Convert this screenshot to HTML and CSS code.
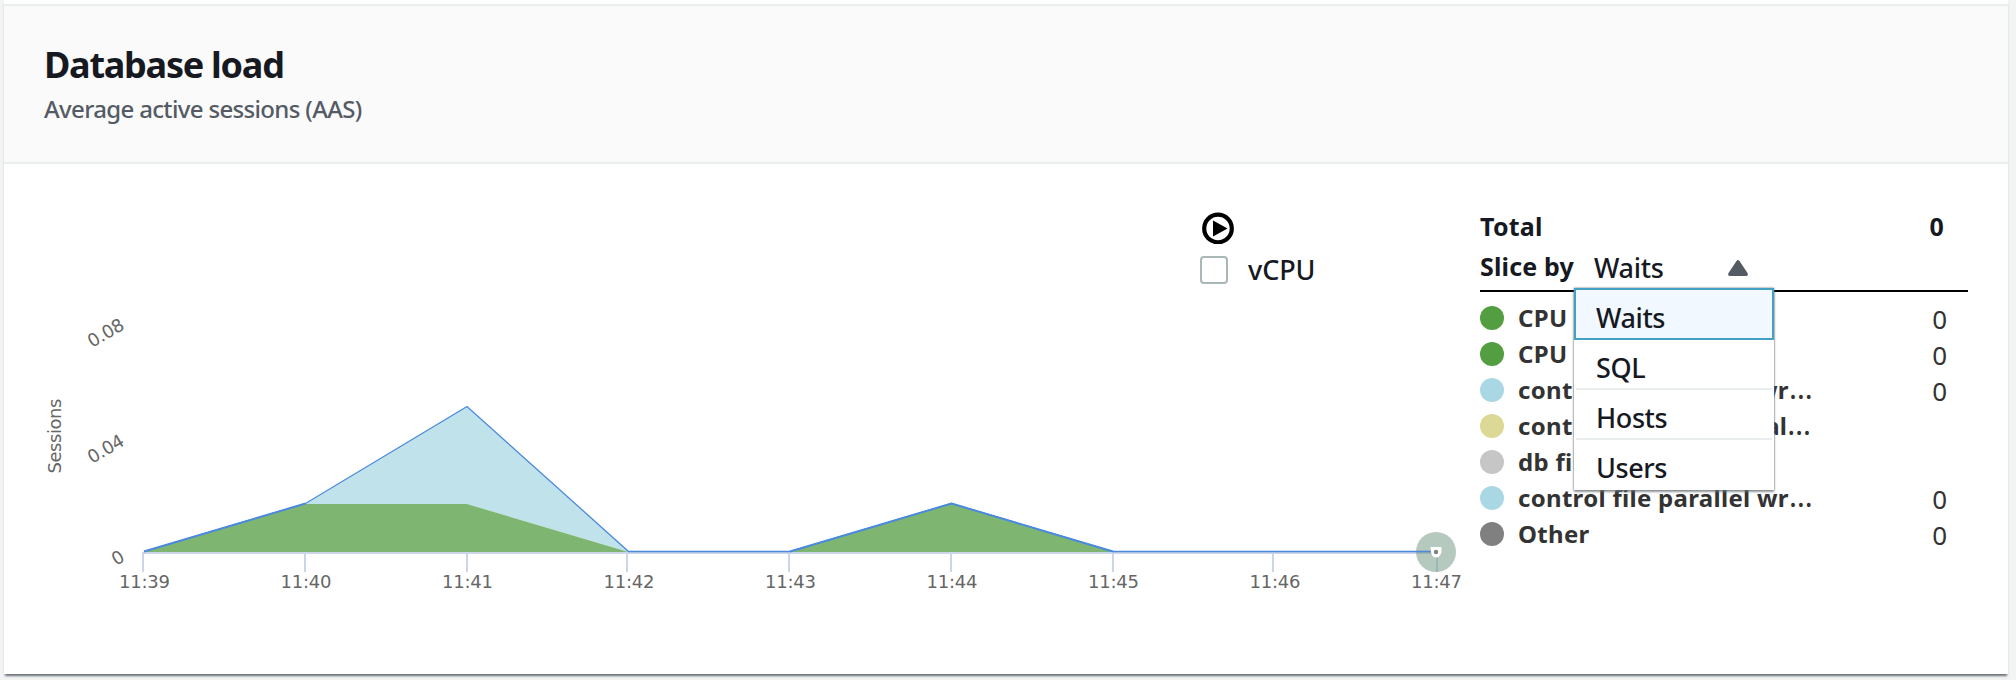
FILE: index.html
```html
<!DOCTYPE html>
<html lang="en">
<head>
<meta charset="utf-8">
<title>Database load</title>
<link rel="stylesheet" href="styles.css">
</head>
<body>
<section class="card">
  <header class="card-header">
    <h2 class="title"><span>Database load</span></h2>
    <p class="subtitle"><span>Average active sessions (AAS)</span></p>
  </header>
  <div class="card-body">
    <div class="chart-column">
      <div class="controls">
        <svg class="play" width="32" height="32" viewBox="0 0 32 32"><circle cx="16" cy="16.500" r="13.800" fill="none" stroke="#000" stroke-width="4.200"/><path d="M11 8.500L25.500 16.500L11 24.500Z"/></svg>
        <label class="vcpu"><i class="checkbox"></i><span>vCPU</span></label>
      </div>
      <svg class="chart" width="1470" height="310" viewBox="0 290 1470 310">
        <g class="axis-text">
          <text transform="translate(61 473.500) rotate(-90)" textLength="75">Sessions</text>
          <text transform="translate(92 348) rotate(-30)" textLength="39">0.08</text>
          <text transform="translate(92 464) rotate(-30)" textLength="39">0.04</text>
          <text transform="translate(116 566) rotate(-30)">0</text>
          <text x="119" y="588" textLength="51">11:39</text>
          <text x="280.500" y="588" textLength="51">11:40</text>
          <text x="442" y="588" textLength="51">11:41</text>
          <text x="603.500" y="588" textLength="51">11:42</text>
          <text x="765" y="588" textLength="51">11:43</text>
          <text x="926.500" y="588" textLength="51">11:44</text>
          <text x="1088" y="588" textLength="51">11:45</text>
          <text x="1249.500" y="588" textLength="51">11:46</text>
          <text x="1411" y="588" textLength="51">11:47</text>
        </g>
        <path d="M305.500 504L467 406.500L628.500 552L467 504Z" fill="#c0e2ea"/>
        <path d="M144 552L305.500 504H467L628.500 552ZM790 552L951.500 504L1113 552Z" fill="#7eb671"/>
        <path d="M142 553H1438M143 554V572M305 554V572M467 554V572M627 554V572M789 554V572M951 554V572M1113 554V572M1273 554V572M1437 554V572" fill="none" stroke="#ccd6eb" stroke-width="2"/>
        <path d="M144 551.500L305.500 503.500L467 406.500L628.500 551.500H790L951.500 503.500L1113 551.500H1436" fill="none" stroke="#4a89dc" stroke-width="1.300"/>
        <path d="M144 551.500L305.500 503.500M790 551.500L951.500 503.500L1113 551.500" fill="none" stroke="#4a89dc" stroke-width="1.900"/>
        <circle cx="1436" cy="552" r="20" fill="#6c947f" fill-opacity=".5"/>
        <path d="M1416 551.500H1431" stroke="#4a89dc" stroke-width="1.200"/>
        <path d="M1430.500 547H1441.500V552Q1440 557.500 1436 557.500Q1432 557.500 1431 552Z" fill="#fff"/>
        <circle cx="1436" cy="552" r="2.200" fill="#808080"/>
      </svg>
    </div>
    <aside class="legend">
      <div class="total"><b>Total</b><b class="total-value">0</b></div>
      <div class="slice">
        <b>Slice by</b>
        <div class="select"><span>Waits</span><svg width="20" height="16" viewBox="0 0 20 16"><path d="M8.500 1Q10 -.8 11.500 1L19.500 13Q20.500 16 18 16H2Q-.5 16 .5 13Z" fill="#545b64"/></svg></div>
        <ul class="menu"><li class="selected">Waits</li><li>SQL</li><li>Hosts</li><li>Users</li></ul>
      </div>
      <ul class="rows">
        <li><i class="dot green"></i><b>CPU</b><span>0</span></li>
        <li><i class="dot green"></i><b>CPU</b><span>0</span></li>
        <li><i class="dot blue"></i><b>control file parallel wr<em>…</em></b><span>0</span></li>
        <li><i class="dot yellow"></i><b>control file sequential<em>…</em></b></li>
        <li><i class="dot silver"></i><b>db file</b></li>
        <li><i class="dot blue"></i><b>control file parallel wr<em>…</em></b><span>0</span></li>
        <li><i class="dot gray"></i><b>Other</b><span>0</span></li>
      </ul>
    </aside>
  </div>
</section>
</body>
</html>
```
FILE: styles.css
```css
* { box-sizing: border-box; }
body {
  margin: 0;
  height: 680px;
  overflow: hidden;
  background: #f2f3f3;
  font-family: "Noto Sans", "Open Sans", sans-serif;
  color: #16191f;
}
.card {
  width: 2004px;
  height: 674px;
  margin-left: 4px;
  background: #fff;
  box-shadow: 0 3px 2px -1px #687078;
  padding-top: 4px;
}
.card-header {
  height: 160px;
  border-top: 2px solid #eaeded;
  border-bottom: 2px solid #eaeded;
  background: #fafafa;
  padding: 35px 40px 0;
}
.title {
  margin: 0;
  font-size: 36px;
  line-height: 48px;
  letter-spacing: -1.25px;
}
.subtitle {
  margin: 4px 0 0;
  font-size: 24px;
  line-height: 32px;
  letter-spacing: -0.66px;
  font-weight: 500;
  color: #545b64;
}
.card-body { display: flex; }
.chart-column {
  width: 1476px;
  flex: none;
  margin-left: -4px;
  padding-top: 48px;
}
.controls { height: 78px; padding-left: 1200px; }
.play { display: block; margin-left: 2px; }
.vcpu {
  display: flex;
  align-items: center;
  gap: 20px;
  height: 36px;
  margin-top: 8px;
  font-size: 27px;
  font-weight: 500;
  letter-spacing: -0.1px;
}
.vcpu span { margin-top: -2px; }
.checkbox {
  width: 28px;
  height: 28px;
  border: 2px solid #aab7b8;
  border-radius: 4px;
}
.chart { display: block; }
.axis-text {
  font-family: "DejaVu Sans", sans-serif;
  font-size: 18px;
  fill: #666;
}
.legend {
  width: 488px;
  margin-left: 4px;
  padding-top: 44px;
  font-size: 25px;
}
.total {
  display: flex;
  justify-content: space-between;
  height: 40px;
  line-height: 36px;
  letter-spacing: 0.2px;
}
.total-value { margin-right: 24px; }
.slice {
  position: relative;
  z-index: 1;
  display: flex;
  height: 44px;
  line-height: 36px;
  border-bottom: 2px solid #000;
}
.slice > b { width: 94px; letter-spacing: 0.15px; white-space: nowrap; }
.select {
  display: flex;
  align-items: center;
  justify-content: space-between;
  height: 40px;
  width: 154px;
  margin-left: 20px;
  font-size: 27px;
  font-weight: 500;
  letter-spacing: -0.3px;
}
.menu {
  position: absolute;
  left: 94px;
  top: 40px;
  width: 200px;
  margin: 0;
  padding: 0;
  list-style: none;
  background: #fff;
  box-shadow: 0 2px 2px #687078aa, 0 0 2px #687078;
  font-size: 27px;
  font-weight: 500;
  letter-spacing: -0.4px;
}
.menu li {
  height: 50px;
  margin: 0 2px;
  padding: 6px 0 0 20px;
  line-height: 44px;
  border-bottom: 2px solid #eaeded;
}
.menu .selected {
  height: 52px;
  margin: 0;
  padding-left: 20px;
  border: 2px solid #44a0c4;
  background: #f1f8ff;
}
.menu li:last-child { border-bottom: 0; }
.rows { margin: 8px 0 0; padding: 0; list-style: none; color: #333; }
.rows li {
  display: flex;
  align-items: center;
  height: 36px;
  white-space: nowrap;
}
.rows b { margin: -1px 0 0 14px; font-size: 24px; letter-spacing: 0.3px; }
.rows em { font-style: normal; font-weight: 400; font-size: 30px; line-height: 1px; }
.rows span { margin: 2px 21px 0 auto; font-size: 26px; }
.dot { width: 24px; height: 24px; border-radius: 50%; flex: none; }
.green { background: #529e41; }
.blue { background: #a9d8e4; }
.yellow { background: #dbd995; }
.silver { background: #c6c6c6; }
.gray { background: #808080; }
```
